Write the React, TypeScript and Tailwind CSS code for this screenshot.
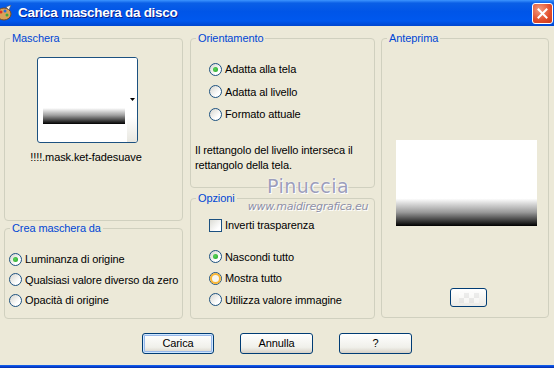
import { ReactNode } from "react";

function Radio({
  label,
  checked = false,
  hover = false,
  h = "h-[22px]",
}: {
  label: string;
  checked?: boolean;
  hover?: boolean;
  h?: string;
}) {
  return (
    <div className={`flex items-center gap-[3px] ${h}`}>
      <span className="w-[13px] h-[13px] shrink-0 rounded-full border border-[#1C5180] bg-[linear-gradient(135deg,#D6D5CE,#FFFFFF_70%)] flex items-center justify-center">
        {hover ? (
          <span className="w-[11px] h-[11px] rounded-full border-2 border-[#F8B636] bg-[#F7F6F0]" />
        ) : checked ? (
          <span className="w-[5px] h-[5px] rounded-full bg-[radial-gradient(circle_at_40%_40%,#5BD45B,#21A121)]" />
        ) : null}
      </span>
      <span className="whitespace-nowrap">{label}</span>
    </div>
  );
}

function Group({
  title,
  className,
  children,
}: {
  title: string;
  className: string;
  children: ReactNode;
}) {
  return (
    <fieldset
      className={`border border-[#D0D0BF] rounded-[4px] m-0 p-0 min-w-0 ${className}`}
    >
      <legend className="ml-[5px] px-[2px] text-[#0046D5] leading-[13px]">
        {title}
      </legend>
      {children}
    </fieldset>
  );
}

function Button({
  label,
  isDefault = false,
  className = "",
}: {
  label: string;
  isDefault?: boolean;
  className?: string;
}) {
  return (
    <button
      className={`h-[21px] rounded-[3px] border border-[#003C74] bg-[linear-gradient(to_bottom,#FFFFFF,#F0F0EA_70%,#D6D0C5)] text-black leading-none ${
        isDefault ? "shadow-[inset_0_0_0_1px_#CEE7FF,inset_0_0_0_2px_#98B8EA]" : ""
      } ${className}`}
    >
      {label}
    </button>
  );
}

export default function App() {
  return (
    <div className="w-[554px] h-[368px] overflow-hidden flex flex-col bg-[#ECE9D8] text-[11px] tracking-[-0.1px] text-black font-['Liberation_Sans',Arial,sans-serif]">
      {/* title bar */}
      <div className="h-[26px] shrink-0 flex items-center bg-[linear-gradient(to_bottom,#3D95FF_0%,#0A5FE6_12%,#0055E8_45%,#0058EE_80%,#0046CF_100%)]">
        <svg width="16" height="16" viewBox="0 0 16 16" className="-ml-[3px] shrink-0">
          <ellipse cx="7" cy="9" rx="7" ry="6" fill="#D9A25A" stroke="#7A4A1C" />
          <circle cx="4" cy="7" r="1.5" fill="#E03020" />
          <circle cx="8" cy="6" r="1.5" fill="#2A6BD8" />
          <circle cx="10" cy="10" r="1.5" fill="#3BAA3B" />
          <path d="M9 2 L14 0 L12 5 Z" fill="#F2F2F2" stroke="#555" strokeWidth="0.6" />
        </svg>
        <span className="ml-[5px] text-white font-bold text-[13.5px] tracking-[-0.3px] [text-shadow:1px_1px_0_#0A1E8C]">
          Carica maschera da disco
        </span>
        <div className="ml-auto mr-[1px] w-[21px] h-[21px] rounded-[3px] border border-white bg-[radial-gradient(circle_at_35%_30%,#F39C80,#E24D2A_60%,#C6381A)] flex items-center justify-center">
          <svg width="11" height="11" viewBox="0 0 11 11">
            <path d="M1.5 1.5 L9.5 9.5 M9.5 1.5 L1.5 9.5" stroke="white" strokeWidth="2" strokeLinecap="square" />
          </svg>
        </div>
      </div>

      {/* body */}
      <div className="relative flex-1 flex flex-col pt-[6px]">
        <div className="flex pl-[4px]">
          {/* left column */}
          <div className="w-[179px] flex flex-col">
            <Group title="Maschera" className="h-[189px]">
              <div className="pl-[32px] pt-[12px]">
                <div className="w-[101px] h-[86px] rounded-[3px] border border-[#1C5180] bg-white flex overflow-hidden">
                  <div className="flex-1 flex flex-col pl-[5px] pt-[50px]">
                    <div className="w-[82px] h-[16px] bg-[linear-gradient(to_bottom,#FFFFFF,#A0A0A0_45%,#000000)]" />
                  </div>
                  <div className="w-[10px] flex flex-col items-center bg-[linear-gradient(to_bottom,#FFFFFF_70%,#E8E7E0)]">
                    <svg width="5" height="3" viewBox="0 0 5 3" className="mt-[40px]">
                      <path d="M0 0 H5 L2.5 3 Z" fill="black" />
                    </svg>
                  </div>
                </div>
                <div className="w-[116px] -ml-[9px] mt-[8px] text-center whitespace-nowrap leading-[13px]">
                  !!!!.mask.ket-fadesuave
                </div>
              </div>
            </Group>
            <Group title="Crea maschera da" className="h-[97px] mt-[1px]">
              <div className="pl-[4px] pt-[14px] flex flex-col">
                <Radio label="Luminanza di origine" checked h="h-[20.5px]" />
                <Radio label="Qualsiasi valore diverso da zero" h="h-[20.5px]" />
                <Radio label="Opacità di origine" h="h-[20.5px]" />
              </div>
            </Group>
          </div>

          {/* middle column */}
          <div className="w-[185px] ml-[7px] flex flex-col">
            <Group title="Orientamento" className="h-[156px]">
              <div className="pl-[18px] pt-[13px] flex flex-col">
                <Radio label="Adatta alla tela" checked h="h-[22.5px]" />
                <Radio label="Adatta al livello" h="h-[22.5px]" />
                <Radio label="Formato attuale" h="h-[22.5px]" />
              </div>
              <p className="pl-[4px] mt-[17px] leading-[15px]">
                Il rettangolo del livello interseca il
                <br />
                rettangolo della tela.
              </p>
            </Group>
            <Group title="Opzioni" className="h-[127px] mt-[4px]">
              <div className="pl-[18px] pt-[10px] flex flex-col">
                <div className="flex items-center gap-[3px] h-[20px]">
                  <span className="w-[13px] h-[13px] border border-[#1C5180] bg-[linear-gradient(135deg,#DCDCD5,#FFFFFF_75%)]" />
                  <span>Inverti trasparenza</span>
                </div>
                <div className="mt-[11px] flex flex-col">
                  <Radio label="Nascondi tutto" checked h="h-[21.5px]" />
                  <Radio label="Mostra tutto" hover h="h-[21.5px]" />
                  <Radio label="Utilizza valore immagine" h="h-[21.5px]" />
                </div>
              </div>
            </Group>
          </div>

          {/* right column */}
          <div className="w-[168px] ml-[6px]">
            <Group title="Anteprima" className="h-[286px]">
              <div className="pl-[14px] pt-[95px] flex flex-col">
                <div className="w-[141px] h-[86px] bg-[linear-gradient(to_bottom,#FFFFFF_0%,#FFFFFF_68%,#9A9A9A_84%,#000000_100%)]" />
                <div className="mt-[62px] ml-[54px] w-[37px] h-[19px] rounded-[3px] border border-[#003C74] bg-[linear-gradient(to_bottom,#FFFFFF,#ECEBE6)] flex items-center justify-center">
                  <div className="w-[20px] h-[10px] opacity-40 bg-[repeating-conic-gradient(#D8D8D8_0_25%,#FFFFFF_0_50%)] bg-[length:10px_10px]" />
                </div>
              </div>
            </Group>
          </div>
        </div>

        {/* buttons */}
        <div className="flex justify-center gap-[26px] mt-[14px]">
          <Button label="Carica" isDefault className="w-[72px]" />
          <Button label="Annulla" className="w-[73px]" />
          <Button label="?" className="w-[73px]" />
        </div>

        {/* watermark */}
        <div className="absolute left-[247px] top-[149px] w-[122px] flex flex-col items-center pointer-events-none">
          <span className="text-[19px] leading-[22px] text-[#9C9EBC] tracking-[0.5px] font-['DejaVu_Sans',sans-serif] [text-shadow:0_0_2px_#FFFFFF,1px_1px_0_#FFFFFF]">
            Pinuccia
          </span>
          <span className="mt-[4px] text-[11px] leading-[12px] italic text-[#8E90A8] font-['DejaVu_Sans',sans-serif] tracking-[-0.3px] [text-shadow:1px_1px_0_#FFFFFF]">
            www.maidiregrafica.eu
          </span>
        </div>
      </div>

      {/* bottom frame */}
      <div className="h-[3px] shrink-0 bg-[linear-gradient(to_bottom,#166AEE,#0842D6,#0031A8)]" />
    </div>
  );
}
